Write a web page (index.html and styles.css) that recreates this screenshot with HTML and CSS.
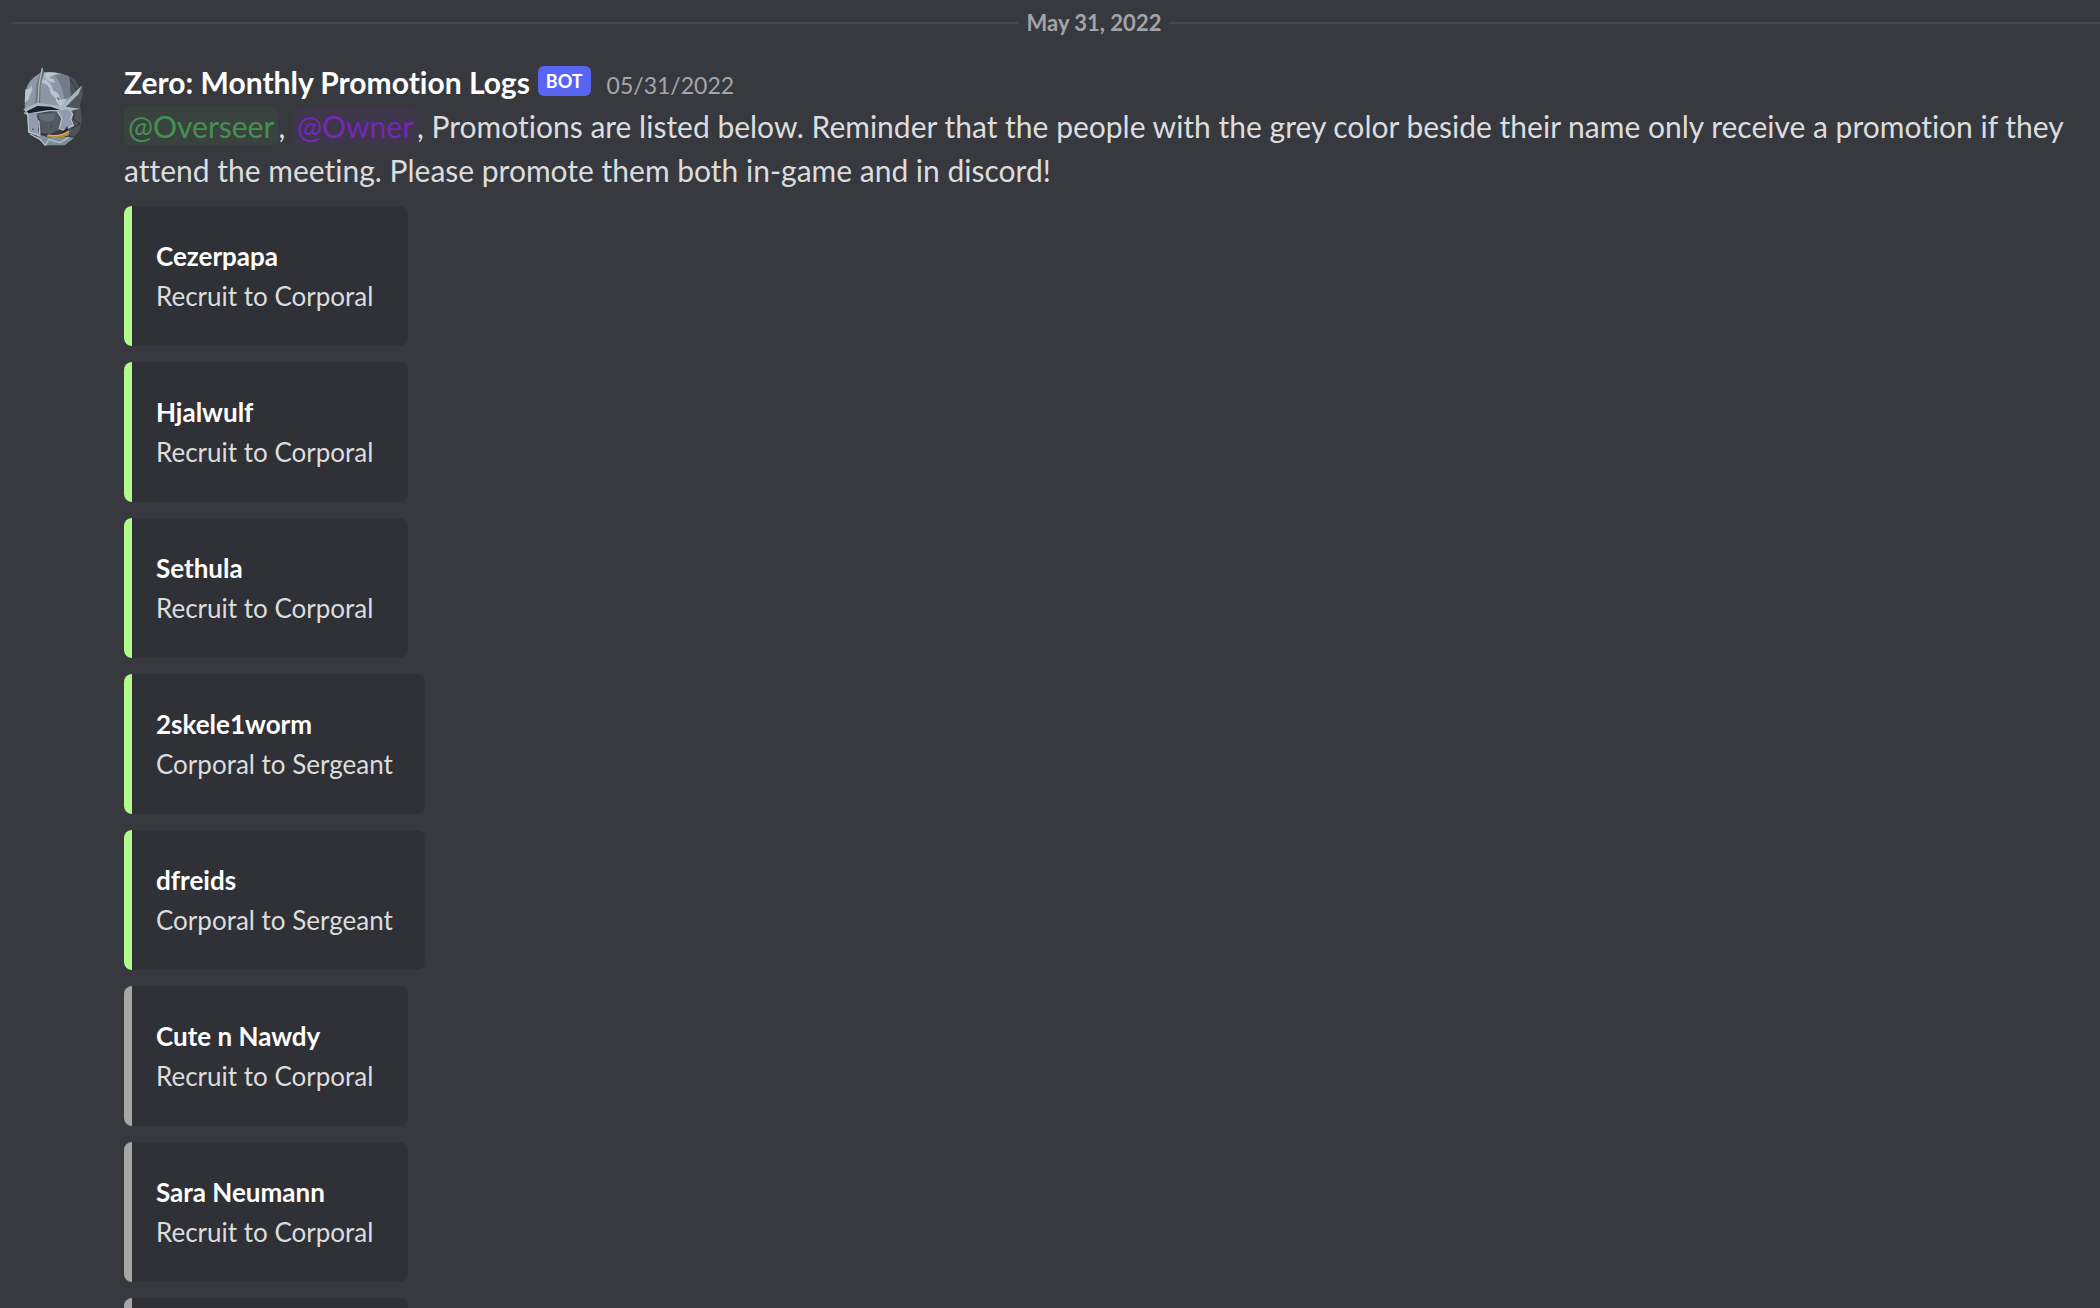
FILE: index.html
```
<!DOCTYPE html>
<html lang="en">
<head>
<meta charset="utf-8">
<title>Monthly Promotion Logs</title>
<link rel="stylesheet" href="styles.css">
</head>
<body>
<main class="chat">
	<div class="divider"><time datetime="2022-05-31">May 31, 2022</time></div>
	<article class="message">
		<svg class="avatar" viewBox="36 48 240 240" aria-hidden="true">
			<!-- back of the helmet -->
			<path d="M200 74 L226 90 L240 118 L250 106 L248 136 L240 166 L246 210 L238 242 L222 262 L200 252 L186 170 Z" fill="#4c535b"/>
			<path d="M208 84 L236 128 L184 174 M226 176 L220 208 L240 222 L214 236" fill="none" stroke="#30353c" stroke-width="3"/>
			<!-- dome -->
			<path d="M74 178 L76 126 Q82 90 120 70 L150 66 Q190 68 208 82 L212 150 L184 180 Z" fill="#8d96a7"/>
			<path d="M160 68 Q196 70 208 84 L212 146 L196 166 Q192 110 160 68 Z" fill="#727b8b"/>
			<path d="M126 68 Q158 64 184 72 Q156 74 146 84 Q162 84 166 98 Q146 100 134 82 L124 96 Z" fill="#b5c4cd"/>
			<path d="M118 88 Q134 84 144 94 Q158 108 160 122 Q178 126 180 148 Q192 150 204 144 L184 172 Q168 160 166 144 Q150 134 148 114 Q138 98 118 98 Z" fill="#b5c4cd"/>
			<path d="M76 118 Q88 122 94 104 L98 122 Q88 132 88 146 L74 158 Z" fill="#b5c4cd"/>
			<path d="M127 52 L133 72 L122 104 L120 168 L106 162 L110 102 Z" fill="#68747b"/>
			<path d="M127 54 L117 104 L114 166" fill="none" stroke="#a9b8bd" stroke-width="4"/>
			<!-- brow and visor slit -->
			<path d="M70 178 L112 158 L184 168 L246 106 L236 132 L198 170 L240 176 L198 186 L150 184 L84 194 Z" fill="#a8b7bf"/>
			<path d="M80 184 L112 168 L152 170 L180 180 L144 180 L108 186 L86 190 Z" fill="#171d29"/>
			<!-- face plates -->
			<path d="M80 190 L112 190 L118 206 L114 240 L120 258 L86 246 Z" fill="#939dae"/>
			<path d="M112 190 L172 186 L184 210 L178 240 L150 252 L120 248 L114 226 Z" fill="#515963"/>
			<path d="M116 194 L166 190 Q164 216 144 216 L118 206 Z" fill="#626b75"/>
			<path d="M172 182 L206 178 L218 194 L212 214 L220 228 L190 240 L178 232 L184 206 Z" fill="#919bad"/>
			<path d="M72 188 L84 194 L86 246 L120 258 L116 210 M172 184 L186 206 L178 236 L190 240 L220 226 L212 208 L218 192 L206 176" fill="none" stroke="#b2c1c8" stroke-width="4"/>
			<path d="M112 196 L118 212 M156 226 L150 236 M178 150 L172 142 M96 236 L102 240" fill="none" stroke="#343b46" stroke-width="3"/>
			<!-- collar -->
			<path d="M108 260 L124 256 L150 264 L204 260 L222 264 L194 286 L138 286 Z" fill="#7f8d97"/>
			<path d="M90 252 L120 268 L136 286 L146 268 L180 278 L206 262" fill="none" stroke="#abc0c7" stroke-width="4"/>
			<path d="M196 236 L202 228 L204 240 L184 248 Z" fill="#222831"/>
			<path d="M140 254 Q176 262 208 242 L206 256 Q176 270 142 262 Z" fill="#b98b3e"/>
			<path d="M144 255 Q178 262 206 244" fill="none" stroke="#dfbc70" stroke-width="3"/>
		</svg>
		<div class="content">
			<header class="header">
				<h1 class="username">Zero: Monthly Promotion Logs</h1>
				<span class="bot">BOT</span>
				<time class="timestamp" datetime="2022-05-31">05/31/2022</time>
			</header>
			<p class="text"><span class="mention overseer">@Overseer</span>, <span class="mention owner">@Owner</span>, Promotions are listed below. Reminder that the people with the grey color beside their name only receive a promotion if they attend the meeting. Please promote them both in-game and in discord!</p>
			<div class="embeds">
				<section class="embed">
					<h2>Cezerpapa</h2>
					<p>Recruit to Corporal</p>
				</section>
				<section class="embed">
					<h2>Hjalwulf</h2>
					<p>Recruit to Corporal</p>
				</section>
				<section class="embed">
					<h2>Sethula</h2>
					<p>Recruit to Corporal</p>
				</section>
				<section class="embed">
					<h2>2skele1worm</h2>
					<p>Corporal to Sergeant</p>
				</section>
				<section class="embed">
					<h2>dfreids</h2>
					<p>Corporal to Sergeant</p>
				</section>
				<section class="embed pending">
					<h2>Cute n Nawdy</h2>
					<p>Recruit to Corporal</p>
				</section>
				<section class="embed pending">
					<h2>Sara Neumann</h2>
					<p>Recruit to Corporal</p>
				</section>
				<section class="embed pending"></section>
			</div>
		</div>
	</article>
</main>
</body>
</html>
```
FILE: styles.css
```
*{ box-sizing:border-box; }
body{ margin:0; background:#38393f; color:#dcddde; font-family:Lato, "Open Sans", sans-serif; font-variant-ligatures:none; }
h1, h2, p{ margin:0; }

.chat{ height:100vh; overflow:hidden; }

.divider{ display:flex; align-items:center; gap:8px; height:46px; margin:0 -76px 0 12px; color:#a3a4a8; font-size:22px; font-weight:700; line-height:26px; }
.divider:before, .divider:after{ content:""; flex:1; height:2px; background:#47484e; }

.message{ display:flex; gap:32px; padding:14px 20px 0 12px; }
.avatar{ flex:none; width:80px; height:80px; margin-top:6px; }
.content{ flex:1; min-width:0; }

.header{ display:flex; align-items:baseline; height:44px; line-height:44px; }
.username{ color:#fff; font-size:30px; font-weight:700; }
.bot{ align-self:center; height:30px; margin:0 16px 2px 8px; padding:0 8px; border-radius:6px; background:#5865f2; color:#fff; font-size:18px; font-weight:700; line-height:30px; }
.timestamp{ color:#a3a6aa; font-size:23px; }

.text{ font-size:30px; line-height:44px; }
.mention{ padding:1px 4px; border-radius:6px; }
.overseer{ background:#3a423f; color:#46904f; }
.owner{ background:#3e364a; color:#7427b8; }

.embeds{ display:flex; flex-direction:column; align-items:flex-start; gap:16px; padding-top:14px; }
.embed{ min-width:284px; height:140px; padding:32px 32px 32px 24px; border-left:8px solid #b0fb8c; border-radius:8px; background:#303136; }
.embed h2{ color:#fff; font-size:26px; font-weight:700; line-height:36px; }
.embed p{ font-size:26px; line-height:44px; }
.pending{ border-left-color:#a6a6a6; }
```
